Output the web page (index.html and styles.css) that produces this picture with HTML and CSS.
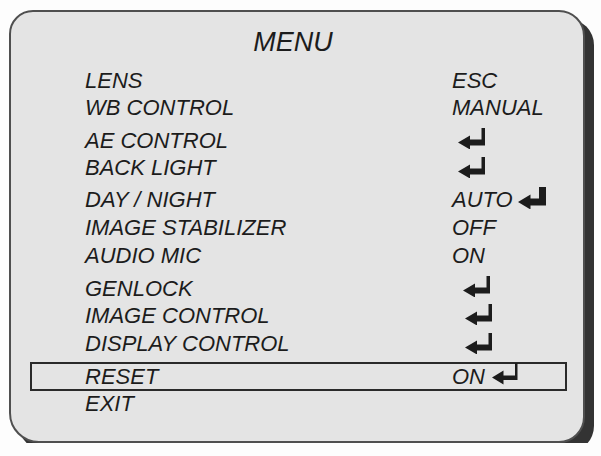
FILE: index.html
```html
<!DOCTYPE html>
<html>
<head>
<meta charset="utf-8">
<link rel="stylesheet" href="styles.css">
</head>
<body>
<div class="panel">
  <div class="title">MENU</div>
  <div class="rows">
    <div class="row r0"><span class="label">LENS</span><span class="value">ESC</span></div>
    <div class="row r1"><span class="label">WB CONTROL</span><span class="value">MANUAL</span></div>
    <div class="row r2"><span class="label">AE CONTROL</span><span class="value"><svg class="enter ind-a" viewBox="0 0 27 21" width="27" height="21"><path d="M23.5 0H27V17.5H12V21.5L0 14.5L12 7.5V11.5H23.5Z"/></svg></span></div>
    <div class="row r3"><span class="label">BACK LIGHT</span><span class="value"><svg class="enter ind-a low" viewBox="0 0 27 21" width="27" height="21"><path d="M23.5 0H27V17.5H12V21.5L0 14.5L12 7.5V11.5H23.5Z"/></svg></span></div>
    <div class="row r4"><span class="label">DAY / NIGHT</span><span class="value">AUTO<svg class="enter big" viewBox="0 0 28 22" width="28" height="22"><path d="M21 0H28V18.5H12.5V22.5L0 15L12.5 7.5V11.5H21Z"/></svg></span></div>
    <div class="row r5"><span class="label">IMAGE STABILIZER</span><span class="value">OFF</span></div>
    <div class="row r6"><span class="label">AUDIO MIC</span><span class="value">ON</span></div>
    <div class="row r7"><span class="label">GENLOCK</span><span class="value"><svg class="enter ind-b" viewBox="0 0 27 21" width="27" height="21"><path d="M23.5 0H27V17.5H12V21.5L0 14.5L12 7.5V11.5H23.5Z"/></svg></span></div>
    <div class="row r8"><span class="label">IMAGE CONTROL</span><span class="value"><svg class="enter ind-c mid" viewBox="0 0 27 21" width="27" height="21"><path d="M23.5 0H27V17.5H12V21.5L0 14.5L12 7.5V11.5H23.5Z"/></svg></span></div>
    <div class="row r9"><span class="label">DISPLAY CONTROL</span><span class="value"><svg class="enter ind-c low" viewBox="0 0 27 21" width="27" height="21"><path d="M23.5 0H27V17.5H12V21.5L0 14.5L12 7.5V11.5H23.5Z"/></svg></span></div>
    <div class="row r10 selected"><span class="label">RESET</span><span class="value">ON<svg class="enter thin" viewBox="0 0 26 22" width="26" height="22"><path d="M23 0H25.5V17H11.5V21.5L0 14.5L11.5 7.5V12.5H23Z"/></svg></span></div>
    <div class="row r11"><span class="label">EXIT</span><span class="value"></span></div>
  </div>
</div>
</body>
</html>
```

FILE: styles.css
```css
html, body {
  margin: 0;
  padding: 0;
  background: #fdfdfd;
}

body {
  font-family: "Liberation Sans", Arial, sans-serif;
  font-style: italic;
  color: #1c1c1c;
}

.panel {
  box-sizing: border-box;
  margin: 10px 0 0 9px;
  width: 576px;
  height: 433px;
  background: #e4e4e4;
  border: 2px solid #4f4f4f;
  border-radius: 24px 26px 26px 30px;
  box-shadow: 9px 9px 0 #333;
  padding-top: 14px;
}

.title {
  font-size: 27px;
  line-height: 32px;
  height: 32px;
  text-align: center;
  padding-right: 8px;
}

.rows {
  display: flex;
  flex-direction: column;
  margin-top: 9px;
}

.row {
  box-sizing: border-box;
  display: grid;
  grid-template-columns: 367px auto;
  margin-left: 19px;
  width: 537px;
  padding-left: 55px;
  font-size: 22px;
  line-height: 27px;
  height: 27px;
}

.value {
  display: flex;
  align-items: flex-start;
}

.r2, .r7 { margin-top: 6px; }
.r4, .r10 { margin-top: 5px; }
.r5, .r6, .r9 { margin-top: 1px; }
.r11 { margin-top: -1px; }

.row.selected {
  height: 29px;
  line-height: 25px;
  border: 2px solid #2a2a2a;
  padding-left: 53px;
}

.enter {
  display: block;
  fill: #1c1c1c;
  margin-top: 1px;
}

.enter.low { margin-top: 3px; }
.enter.mid { margin-top: 2px; }

.ind-a { margin-left: 6px; }
.ind-b { margin-left: 11px; }
.ind-c { margin-left: 13px; }

.enter.big {
  margin-left: 5px;
  margin-top: 1px;
}

.enter.thin {
  margin-left: 7px;
  margin-top: -1px;
}
```
